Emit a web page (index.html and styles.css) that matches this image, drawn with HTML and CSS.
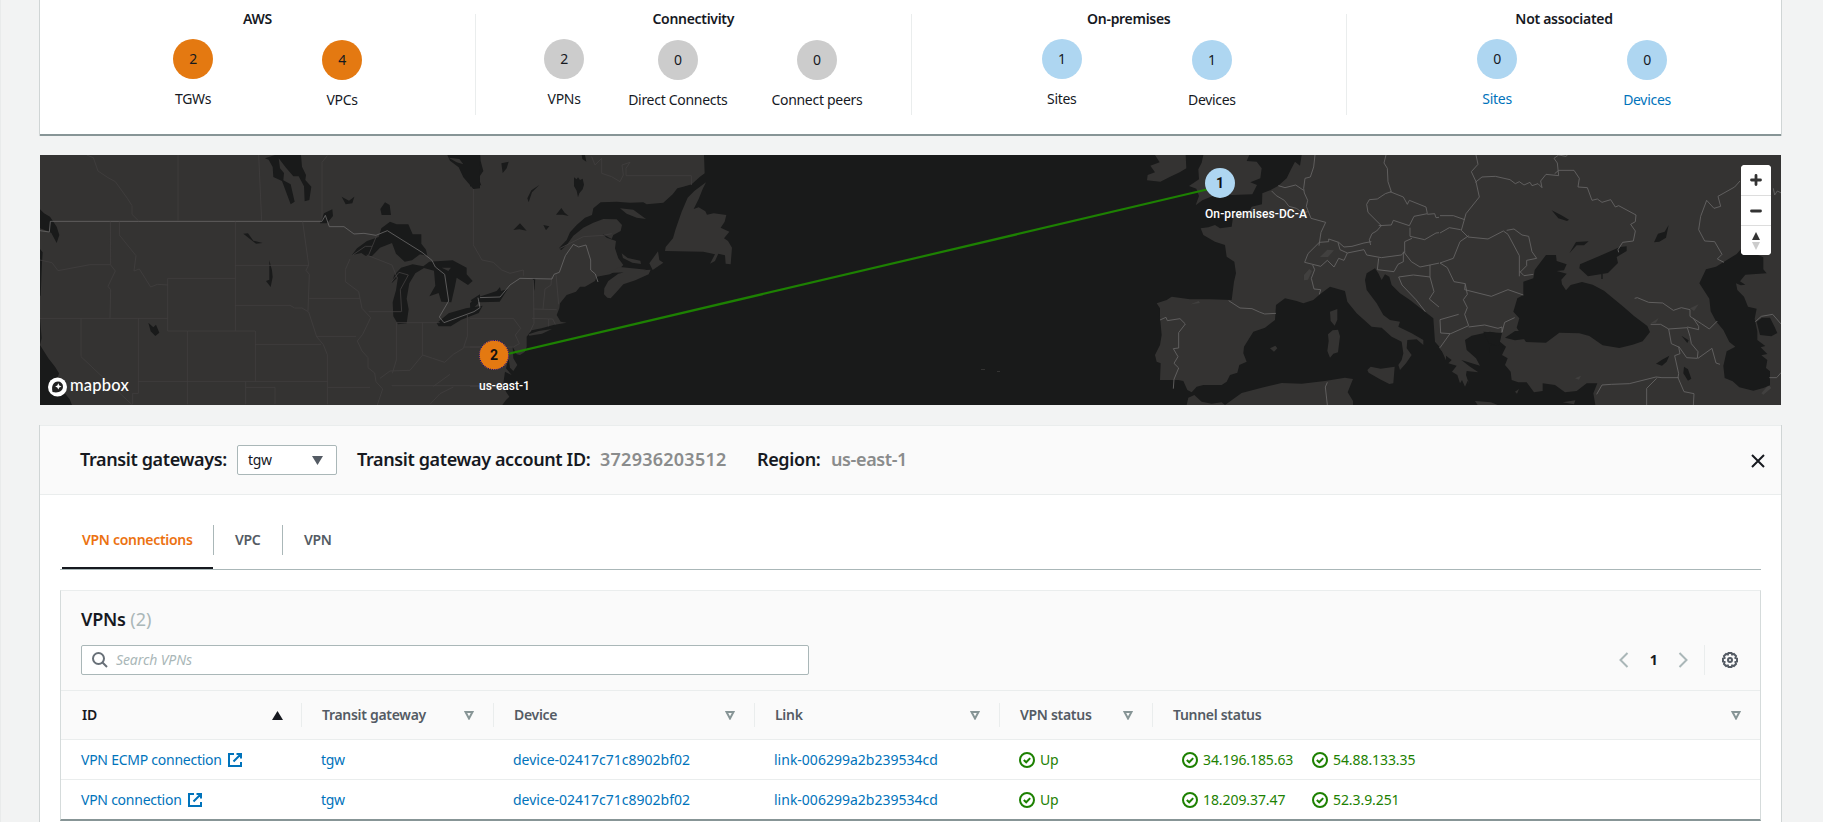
FILE: index.html
```
<!DOCTYPE html>
<html lang="en">
<head>
<meta charset="utf-8">
<title>Transit gateway network</title>
<link rel="stylesheet" href="styles.css">
</head>
<body>
<svg class="defs" width="0" height="0">
  <symbol id="ok" viewBox="0 0 16 16"><circle cx="8" cy="8" r="7" fill="none" stroke="#1d8102" stroke-width="2"/><path d="M4.800 8l2.400 2.300 4-4.200" fill="none" stroke="#1d8102" stroke-width="2"/></symbol>
  <symbol id="ext" viewBox="0 0 14 14"><path d="M6 1H1v12h12V9M8.500 1H13v4.500M13 1L5.500 8.500" fill="none" stroke="#0073bb" stroke-width="2"/></symbol>
  <symbol id="sort" viewBox="0 0 10 9"><path d="M1.500 1h7L5 7.500z" fill="none" stroke="#879596" stroke-width="2"/></symbol>
</svg>
<main class="page">
  <section class="summary">
    <div class="group"><h3>AWS</h3><div class="stats">
      <div class="stat"><span class="dot orange">2</span><span>TGWs</span></div>
      <div class="stat low"><span class="dot orange">4</span><span>VPCs</span></div></div></div>
    <div class="group"><h3>Connectivity</h3><div class="stats">
      <div class="stat"><span class="dot grey">2</span><span>VPNs</span></div>
      <div class="stat low"><span class="dot grey">0</span><span>Direct Connects</span></div>
      <div class="stat low"><span class="dot grey">0</span><span>Connect peers</span></div></div></div>
    <div class="group"><h3>On-premises</h3><div class="stats">
      <div class="stat"><span class="dot blue">1</span><span>Sites</span></div>
      <div class="stat low"><span class="dot blue">1</span><span>Devices</span></div></div></div>
    <div class="group"><h3>Not associated</h3><div class="stats">
      <div class="stat"><span class="dot blue">0</span><a>Sites</a></div>
      <div class="stat low"><span class="dot blue">0</span><a>Devices</a></div></div></div>
  </section>

  <section class="map">
    <svg class="canvas" viewBox="0 0 1741 250">
      <!-- North America: land, islands -->
      <g transform="translate(430 -10) scale(.33333)">
        <path class="land" d="M-1300 30H702L704 85 690 95 665 118 640 125 622 130 608 148 580 173 530 178 520 172 480 173 440 170 392 172 370 190 366 210 345 218 320 240 300 262 290 285 268 308 273 316 290 300 310 272 340 248 370 233 400 222 440 223 456 240 452 258 430 270 425 282 397 266 410 278 438 288 435 310 445 340 460 360 448 372 420 388 380 395 375 408 345 425 330 425 318 440 290 450 270 475 268 490 260 510 272 530 290 533 250 540 215 550 185 556 170 575 170 605 165 620 150 630 140 628 128 605 130 640 142 660 130 678 120 668 116 640 108 670 125 690 105 680 100 715 108 740 118 755 108 765 97 780H-1300z"/>
        <path class="land" d="M708 112l-10 20-12 30-15 30 15-5 20 12 5 10 20-4 38 5-5 20-12 18 26 12-16 20 12 8 12 20-4 50-15-2-2-25-20-5-10 22-15 8 15-28-35-8-115-2 2-12 22-26 8-28 18-52 18-42 20-20zM450 190l40 4 38 28-28-4-30-12zM403 430l12-22 30-22 35-8 62-4-6 14-40 18-36 12-20 22-18 20-10-2-10-10zM455 325l18 14 38 8 2 10-26-4-28-14zM538 355l26-36 4 26 12 8-32 22zM410 384l40-18 80 8-60 8zM176 568l30-10 40-6-30 14-38 6z"/>
        <path class="water" d="M0 20h30l2 28 8 30-14 20 8 24-20-12-14 16zM94 55l22-5-6 20-12 14zM172 160l12-24 24-16-22 22-10 30zM312 97l8 6 4-6 6 8 8-4 4 18-4 14-10 12-4 12-4-20-8-14zm-54 112l16-20 10 14 12 10-18-4zM130 255l20-20 20 22-22-4zM220 240l18 4-10 12zM335 30h10l4 20-12-8zM188 400h8l-3 38zM0 475l15-15 65-22 10-12 3 12 20-6-24 38-60 2-28 26z"/>
        <path class="state" d="M10 120V300L36 345 70 352 95 375 120 385 160 375V392M365 35l10 25 20-20v45l30 10 25 15 10-20-4-30 24-8-12 18v22H664v28M190 405l2 130-12 25M245 395l-2 25-18 12-6 60M258 388l8 90M190 492l70 2M186 520l62 2 8 16M236 522v22M0 520H130l22 30-16 20 12 26-18 10H0M270 310l70-35 60-4 25-5M0 724h100"/>
        <path class="border" d="M0 500l30-12-6-30 66-2 30-36 30-20 96 2 6-14 16-6 18-50 24-34 16 8 22-6 14 45v30l14 12 8 24"/>
      </g>
      <!-- United States and Canada: lakes, state lines -->
      <g transform="translate(-10 -10) scale(.33333)">
        <path class="water" d="M705 40l30-10h78l3 35 12 25-2 15 18 20-6 40-14 4-2-45-16-30-16 0-22-26-22-28 4 30 12 14-2 22 22 12 12 52-12 8-14-38-12-32-26-12-2-30-12-22zM30 193l12 12 18 10 20 30 8 25-8 24-16-30-12-6-22-8zM30 312l8 10-2 30-4 100h-2zM30 520l5 60-5 20 25 40 20 25 12 20-8 28 40 50 15 37H30zM355 533l15 14 8-8 10 24-12 10-14-14zM640 266l14-1 16 22 28 7-20 2-18-14zM718 346l8 30 2 20-6 30-14-18 10-4zM1252 30h98v100l-20 2-30-35-14-30-26-20zM935 155l22 12 16-12-6 20-20 3zM1065 172l14 8 4 30-28 0-4-18zM870 235l12-30 25-12 2 20-18 22zM966 330l15-20 30-22 35-12 8-26 26-20 20 8 35 0 13 30 26 0 0 28 14 18 4 18-22-4-24 18-22 4-26-24-12-32-36 14-24 25-20-1-12-8zM1085 415l8-25 20-22 35-10 32 6 18-14 70-4 42 22 0 20 18 20-14 12-34-22-6 30-10 44-30-2-8-26-28 10 18-32-4-45-30-8-26 16-18 30-8 46 6 32-6 42-26 3-14-24-2-42 10-36 6-40zM1220 535l36-30 52-15 50-8-12 22-52 20-32 20-36 0zM1322 466l28-18v22l-20 4z"/>
        <path class="land" d="M1256 38l32 4 12 16-20-6zM1235 368h28l-8 10z"/>
        <path class="border" d="M30 257l28 4 3-32H876l10-18 12 34 44 0 30 22 30-2 36 6 34-14L1176 322l30 24 10 20 28 22 12 80-28 48 14 17 90-33 18-12-6-30"/>
        <path class="state" d="M170 30l20 8 14 40 30 20 22 12 36 50 14 22 0 26 20 20M444 30V228M686 30l9 198M876 228V52l16-20M241 230l1 130 14 18-22 46 8 10-2 86M268 230v40l50 62-6 46 16-6 34 54 20-8 32 2M30 345l36 8 18 24 96-18h60M30 520H413M153 520V635L305 778M413 400V558M413 400H616M616 230V558M616 361H836M818 230l18 130-8 16 10 12-4 110M616 481H780l14 8 22 0 20 12 24 74 20 24 12 30V778M413 558H676V709M676 598H873M325 520V745H308V778M472 558V778M325 709H893M647 709V778M647 727h88v50M838 460h152M990 460l6 30 26 28-24 50-16 20 14 30 18 20 0 30 20 16 4 26 20 22-20 60M858 574h120M960 342l-14 32 0 36 40 30 4 20M1010 330l76 30 16 40M1016 500h98M1115 500l-4-66 24-44-28-8-22 28M1099 533v112l-12 40M1177 533v98M1099 533h130M1050 700l30-22 60-2 38-46 30 10 36 12 26-24 30-18 12-36V510M1302 606h48M893 727h127M1085 722H1350M1260 688l-50 36M1200 778l30-32 40-20M1016 330l24-58M968 330l38-26h20"/>
      </g>
      <!-- Western Europe -->
      <g transform="translate(1060 -10) scale(.33333)">
        <path class="land" d="M605 30l-5 32-15-12-13 25-12 25-25 22-23 13-25 10-1 33-31 7-5 10-50 15-5 35-35 5-15-10-20 7-23 3 8 20 35 20 30 10 5 35 23 15 5 35-6 25-7 55-65-2-60 0-55-8-15 10-30 10 10 15 0 25 5 55-5 30-15 30 5 20 12 5-2 50 55 0 15 3 12 27 13 7 15-17 20-5 55 0 15-10 10-20 22-7 6-23 22-10-10-25 2-20 28-45 35-12 30-23 3-45 27-20 35 8 20 7 30-10 20-17 30-23 45 13 7 32 28 35 45 40 30 3 30 27 30 15 5 35-5 20-10 15 5 15 18-20 17-25-15-20 2-25 28-2 20 17 0-15-35-20-40-20 5-15-30-5-20-15-20-35-30-40-5-30 5-20 25-15 10 15 10 20 10-17 13 7 7 25 25 25 30 20 45 35 25 20 5 70 17 20 16 36V30z"/>
        <path class="land" d="M165 30h92l2 40-20 12-30 14-28 14-40-4 2-16 22-8-14-20 28-10zM310 30h138l-8 18 30 2 15 20-4 30-30 12 20 8-14 28-60 2-40-4-26 10-24 10-20 15 10-28-8-22-22-8 30-20-2-30 10-20zM690 500l22-8 0 32-8 18-12-14zM684 568l14-12 16-2 6 20-6 48-14 4-10 12-8-20 4-30zM802 675l10-10 30 6 42-6-4 50-12 2-28-14-34-20zM510 610l16-8 6 8-10 10zM260 780l5-22 18-8 22 20 30 6 30-4 10 8zM375 780l50-36 60-16 60-14 60 2 70-8 60-10 24 4-16 40 16 26v12z"/>
        <path class="hill" d="M660 336l22-22 20 2-18 20zM612 390l16-18 8 6-12 26-12 2zM272 478l24-10 4 6z"/>
        <path class="border" d="M645 30l-4 36-10 30-16 4-4 30 2 14 10 22-4 18 14 36 44 12-14 30-6 40M515 138l14 14 24 14 14 18 22 6 20 14 14-4M535 122l20 6 32-8 24 16M614 352l10-26 34-34 28-2 0-8 30 10 16 14 24-2 36-10 22-4M714 292l6 22 22 10-10 22-16-6-14 26-20-20-20 18-48-12M638 360l6 14-10 26 8 32 20 2-4 14M386 467l34 22 36 2 22 10 16 6 34-2M180 525l18-8 4 10 38-6 16 16-20 26v46l-16 2 14 24-12 20 14 14-14 34-2 28M858 30l-6 24 10 16 2 40 10 30-18 6-24 16-24 2-8 14 4 24 40 40-14 16-14 8-8 18 4 16M870 140l40 16 12 22 6-12 50 20 4 20-40 8-14 28-48-16-6 14-38 2M982 208l22-2 4 12 50-6 22 4M930 248v26l44 10 34-20 20-2 14-14 38 6M936 280l-22 10 0 34 20 26 26 16 30-6 38-8 26 6 26-60M742 324l50-10 8 16 44 8 60-8 10-10M836 340l-4 34 50 6 12-22 16-8 0-30M896 396l44-6 50 6 12 44-14 22M896 396l10 24 42 44 28 36M990 360l0 36M1028 354l20 30 14 24 18 14M988 462l36 30 16 34 10 38-28 44M1040 526l30-14 10 0M1050 566l30-4M682 712l-6 14 6 54"/>
      </g>
      <!-- Eastern Europe, Black Sea and Caspian Sea -->
      <g transform="translate(1400 -10) scale(.33333)">
        <path class="land" d="M-3 30V608L15 630 35 645 25 655 50 662 36 680 52 690 60 715 66 705 75 725 84 705 88 720 78 690 80 678 115 682 88 664 64 645 120 662 108 640 80 615 75 585 95 572 150 560 182 567 180 590 198 605 186 630 203 640 195 660 212 680 215 705 235 712 260 712 282 742 308 738 308 715 345 720 375 742 410 738 440 715 472 715 460 745 466 780H1030V30zM105 768l48 4 20 8h-60zM368 772l38-6-4 12zM225 740l12-8-6 14z"/>
        <path class="hill" d="M510 572l20-4 14 4-14 6zM540 565l24-6-6 18-16 2zM585 570l40-14-22 16zM632 535l24-16-8 14zM750 490l26-12-14 20zM964 745l22-26 8 10-24 20zM405 700l18-8-6 12z"/>
        <path class="water" d="M230 548l8-28-18-20 12-40 18-10 0-40 30-10 4-25 34-45 30 0 2 18 30 10-8 18-22 2 30 8-16 18 2 14 12 18 14-16 34-9 32 8 34 18 60 50 30 26 40 30 8 18-22 28-30 10-40 10-50-8-40-28-30-8-60-2-40 30-60-2zM420 358l60-26 60-26 20-2 0 14-30 18 4 18-30 30-60 10-26-24zM484 380h4v22h-4zM195 578l30-20 20 0 28 12-18 12-30 4zM130 560l56 4-10 40-30-10zM150 600l40 4-10 20-30 0zM335 196l28 14 24 14-6 4-26-8zM388 325l20-34 38-2-14 12-22 0zM642 292l12-26 20-6 12-20-8 38-20 12zM648 656l18-12 22-12-8 18-14 12zM732 665l12 8 10 28-10 6-14-22zM724 572l22 14-4 8z"/>
        <path class="water" d="M778 415l20-42 30-8 62-38 16-18 64 28 0 36 10 12-64 4-16 20 16 10-14 2-14-6 4 20 20 20 12 30 26 6-6 30 8 38 0 26 24 18-14 4 20 20-18 4 18 14-4 24 12 10 0 42-20 8-30 8-42-10-20-18-24-10-4-36 10-44 26-14-18-14-18-36-22-26-16-30-4-38zM950 530l16-12 24 0 14 28 8 18-18 10-34-4z"/>
        <path class="border" d="M108 30l6 28-20 22 14 30 10 46-40 50-14 50 20 20 60 6 46-24 14 10 34 64 0 62M106 112l20-16 40-2 44 10 16 12 12-6 14 10 18-8 6 10 18-6 12 12-4-20 16-20 38 4-4-38-10-14 14-10 22 4 8-8M344 86l12-10 46 0 16 24-4 26 28 2 14 38 16-4 14 10 26-8 14 22 10-4 52 28-2 20-14 8 14 20-6 30-32 4-14 22 2 8M200 256l22-4 24 18 20 4 10 46 14 20-30 6 0 16-20 20M240 380l12 12 28-4M0 212l40 0 34 12M0 264l28-16 34 6M0 354l40-14 20-50 26-18M0 354l22 14 20 42 34 6-2 18 80 20 50-20 46 16M76 418l6 30-12 16 12 24-8 20 12 34-54 24-30-2-2-40 56-16M86 546l48-6 40 10 12-4 0 16 8-30 30-14M30 566L0 608M584 460l8-2 34 14 42 2 32 22 24-8 26 6 0 20 34 22 24 16 24-24M632 538h30l24 14 8 44 22 10 4 20-16 6 12 54-2 12 18 42 30 6-2 36M686 552l56-4 8 26 4 22 20 24-2 20-32-2-24-34M774 640l42-30 12 44 12 4M760 520l16 24 0 10-34-8M470 748l16-28 28-2 54-2 80-20 18 2 50 0M650 700l-30 30 0 50M900 108l-16 18-50 28 8 30-20 6-22-24-18 48-6 40 18 34 30 2 22 38-14 14 20 10M946 530l18-16 34-6 26 30M988 698l22 0 14-16M1000 130l4 20 8-12 12 6"/>
      </g>
      <path class="land" d="M941 214h4v1h-4zM957 216h3v1h-3z"/>
      <path d="M453 202.500L1168 34.300" stroke="#1d8102" stroke-width="2.200"/>
      <g transform="translate(17.500 232)">
        <circle r="9.500" fill="#fff"/><path d="M-5 5C-6.500-1-4-5.500.5-5.500A5 5 0 0 1 5.500-.5C5.500 4 1 6.500-5 5z" fill="#222"/><path d="M.8-3.800l1 2.200L4-.6 1.800.4l-1 2.200-1-2.200-2.200-1 2.200-1z" fill="#fff"/>
      </g>
    </svg>
    <span class="mapbox">mapbox</span>
    <div class="pin aws"><b>2</b><span>us-east-1</span></div>
    <div class="pin site"><b>1</b><span>On-premises-DC-A</span></div>
    <div class="zoom">
      <button aria-label="Zoom in"><svg width="12" height="12"><path d="M6 1.500v9M1.500 6h9" stroke="#333" stroke-width="2.800" stroke-linecap="round"/></svg></button>
      <button aria-label="Zoom out"><svg width="12" height="12"><path d="M1.500 6h9" stroke="#333" stroke-width="2.800" stroke-linecap="round"/></svg></button>
      <button aria-label="North"><svg width="8" height="18"><path d="M0 8l4-8 4 8z" fill="#333"/><path d="M0 10h8l-4 8z" fill="#ccc"/></svg></button>
    </div>
  </section>

  <section class="detail">
    <header class="bar">
      <h2 class="gw">Transit gateways:</h2>
      <div class="select"><span>tgw</span><svg width="11" height="9"><path d="M0 0h11L5.500 9z" fill="#545b64"/></svg></div>
      <h2 class="acct">Transit gateway account ID:</h2><h2 class="muted num">372936203512</h2>
      <h2 class="reg">Region:</h2><h2 class="muted">us-east-1</h2>
      <svg class="close" width="14" height="14"><path d="M1 1l12 12M13 1L1 13" stroke="#16191f" stroke-width="2"/></svg>
    </header>
    <nav class="tabs">
      <div class="tab active"><span>VPN connections</span></div>
      <div class="tab"><span>VPC</span></div>
      <div class="tab last"><span>VPN</span></div>
    </nav>
    <section class="table">
      <div class="tools">
        <h2 class="title">VPNs <i>(2)</i></h2>
        <div class="row">
          <div class="search"><svg width="16" height="16"><circle cx="6.500" cy="6.500" r="5.500" fill="none" stroke="#687078" stroke-width="2"/><path d="M10.500 10.500l4.500 4.500" stroke="#687078" stroke-width="2"/></svg><span>Search VPNs</span></div>
          <div class="pager">
            <svg width="10" height="16"><path d="M8.500 1L1.500 8l7 7" fill="none" stroke="#aab7b8" stroke-width="2"/></svg>
            <b>1</b>
            <svg width="10" height="16"><path d="M1.500 1l7 7-7 7" fill="none" stroke="#aab7b8" stroke-width="2"/></svg>
          </div>
          <div class="gear"><svg width="16" height="16" viewBox="0 0 16 16" fill="none" stroke="#545b64" stroke-width="2"><path d="M6.500 1h3l.6 1.600 1.800-.6 2.100 2.100-.6 1.800 1.600.6v3l-1.600.6.6 1.800-2.100 2.100-1.800-.6L9.500 15h-3l-.6-1.600-1.800.6L2 11.900l.6-1.800L1 9.500v-3l1.600-.6L2 4.100 4.100 2l1.800.6z"/><circle cx="8" cy="8" r="2"/></svg></div>
        </div>
      </div>
      <div class="grid head">
        <div class="th dark">ID<svg width="11" height="9"><path d="M0 9h11L5.500 0z" fill="#16191f"/></svg></div>
        <div class="th">Transit gateway<svg width="10" height="9"><use href="#sort"/></svg></div>
        <div class="th">Device<svg width="10" height="9"><use href="#sort"/></svg></div>
        <div class="th">Link<svg width="10" height="9"><use href="#sort"/></svg></div>
        <div class="th">VPN status<svg width="10" height="9"><use href="#sort"/></svg></div>
        <div class="th end">Tunnel status<svg width="10" height="9"><use href="#sort"/></svg></div>
      </div>
      <div class="grid body">
        <div class="td"><a class="name">VPN ECMP connection</a><svg class="ext" width="14" height="14"><use href="#ext"/></svg></div>
        <div class="td"><a>tgw</a></div>
        <div class="td"><a class="code">device-02417c71c8902bf02</a></div>
        <div class="td"><a class="code">link-006299a2b239534cd</a></div>
        <div class="td ok"><svg width="16" height="16"><use href="#ok"/></svg>Up</div>
        <div class="td ok tunnels"><div><svg width="16" height="16"><use href="#ok"/></svg>34.196.185.63</div><div><svg width="16" height="16"><use href="#ok"/></svg>54.88.133.35</div></div>
      </div>
      <div class="grid body final">
        <div class="td"><a class="name">VPN connection</a><svg class="ext" width="14" height="14"><use href="#ext"/></svg></div>
        <div class="td"><a>tgw</a></div>
        <div class="td"><a class="code">device-02417c71c8902bf02</a></div>
        <div class="td"><a class="code">link-006299a2b239534cd</a></div>
        <div class="td ok"><svg width="16" height="16"><use href="#ok"/></svg>Up</div>
        <div class="td ok tunnels"><div><svg width="16" height="16"><use href="#ok"/></svg>18.209.37.47</div><div><svg width="16" height="16"><use href="#ok"/></svg>52.3.9.251</div></div>
      </div>
    </section>
  </section>
</main>
</body>
</html>
```
FILE: styles.css
```
* { box-sizing: border-box; }
body { margin: 0; height: 822px; overflow: hidden; background: #f2f3f3; color: #16191f; font: 14px/22px "Noto Sans", "Open Sans", sans-serif; letter-spacing: -0.3px; }
h2, h3 { margin: 0; font-weight: 600; }
a { color: #0073bb; }
svg { flex: none; display: block; }
.defs { position: absolute; }
.page { padding: 0 42px 0 39px; border-left: 1px solid #e9ebeb; }

.summary { height: 136px; padding-top: 14px; display: grid; grid-template-columns: 436px 435.5px 435.5px 434px; background: #fff; border-bottom: 2px solid #879596; box-shadow: -1px 0 #d0d5d5, 1px 0 #d0d5d5; }
.group { height: 101px; border-right: 1px solid #eaeded; }
.group:last-child { border-right: 0; }
.group h3 { font-size: 14px; line-height: 22px; margin-top: -6px; text-align: center; }
.stats { display: flex; justify-content: space-evenly; padding: 9px 4px 0 24px; }
.stat { display: flex; flex-direction: column; align-items: center; gap: 9px; }
.low { padding-top: 1px; }
.dot { width: 40px; height: 40px; line-height: 40px; border-radius: 50%; text-align: center; }
.orange { background: #e47911; }
.grey { background: #ccc; }
.blue { background: #aed6f1; }

.map { position: relative; height: 250px; margin-top: 19px; background: #191a1a; overflow: hidden; font-family: Roboto, "Liberation Sans", sans-serif; }
.canvas { width: 1741px; height: 250px; }
.land { fill: #343332; }
.water { fill: #191a1a; }
.hill { fill: #41403f; }
.state, .border { fill: none; stroke-width: 2.5px; }
.state { stroke: #413f3e; }
.border { stroke: #696867; }
.mapbox { position: absolute; left: 30px; top: 218px; color: #fff; font: 500 16.5px/24px Lato, sans-serif; letter-spacing: .2px; }
.pin { position: absolute; color: #fff; letter-spacing: 0; }
.pin b { display: block; width: 30px; height: 30px; line-height: 30px; border-radius: 50%; text-align: center; color: #111; font-size: 14px; }
.pin span { display: block; margin-top: 7px; font: 500 12px/18px Roboto, sans-serif; white-space: nowrap; }
.aws { left: 439px; top: 185px; }
.aws b { background: #e47911; border: 1px dotted #00009c; line-height: 28px; }
.site { left: 1165px; top: 13px; }
.site b { background: #aed6f1; }
.site span { letter-spacing: .1px; }
.zoom { position: absolute; right: 10px; top: 10px; width: 30px; border-radius: 4px; background: #fff; overflow: hidden; }
.zoom button { display: flex; width: 30px; height: 30px; padding: 0; align-items: center; justify-content: center; border: 0; background: #fff; }
.zoom button + button { border-top: 1px solid #ddd; }

.detail { height: 420px; margin-top: 20px; background: #fff; border-top: 1px solid #eaeded; box-shadow: -1px 0 #d0d5d5, 1px 0 #d0d5d5; }
.bar { height: 69px; padding: 0 16px 0 40px; display: flex; align-items: center; background: #fafafa; border-bottom: 1px solid #eaeded; }
.bar h2 { font-size: 18px; line-height: 22px; margin-top: -3px; white-space: nowrap; letter-spacing: -0.38px; }
.bar .gw { width: 157px; }
.bar .acct { width: 243px; margin-left: 20px; }
.bar .num { width: 157px; letter-spacing: .25px; }
.bar .reg { width: 74px; }
.bar .muted { color: #8a8c8c; }
.select { width: 100px; height: 30px; padding: 0 13px 0 10px; display: flex; align-items: center; justify-content: space-between; background: #fff; border: 1px solid #aab7b8; border-radius: 2px; }
.close { margin: 2px 0 0 auto; }
.tabs { height: 75px; margin: 0 20px; padding: 30px 0 0 2px; display: flex; border-bottom: 1px solid #aab7b8; }
.tab { position: relative; height: 30px; padding: 0 20px; line-height: 30px; border-right: 1px solid #aab7b8; color: #545b64; font-weight: 600; }
.tab.active { width: 152px; color: #ec7211; }
.tab.active::after { content: ""; position: absolute; left: 0; right: 0; bottom: -14px; height: 2px; background: #16191f; }
.tab:nth-child(2) { width: 69px; padding-left: 21px; }
.tab.last { border-right: 0; padding-left: 21px; }
.table { margin: 20px 20px 0; height: 231px; border: 1px solid #d5dbdb; border-top-color: #eaeded; border-bottom: 2px solid #879596; }
.tools { height: 100px; padding: 16px 20px 0; background: #fafafa; border-bottom: 1px solid #eaeded; }
.title { font-size: 18px; line-height: 24px; letter-spacing: -0.2px; }
.title i { color: #aab7b8; font-style: normal; font-weight: 400; letter-spacing: 0; }
.row { display: flex; margin-top: 14px; align-items: center; }
.search { width: 728px; height: 30px; padding-left: 10px; gap: 8px; display: flex; align-items: center; background: #fff; border: 1px solid #aab7b8; border-radius: 2px; color: #aab7b8; font-style: italic; letter-spacing: -0.1px; }
.pager { display: flex; align-items: center; justify-content: space-between; width: 69px; margin-left: auto; margin-right: 16px; }
.gear { height: 30px; padding: 7px 2px 0 17px; border-left: 1px solid #eaeded; }
.grid { display: grid; grid-template-columns: 241px 192px 261px 245px 153px 1fr; align-items: center; }
.head { height: 49px; background: #fafafa; border-bottom: 1px solid #eaeded; }
.th { height: 24px; padding: 0 19px 0 20px; display: flex; align-items: center; justify-content: space-between; font-weight: 600; color: #545b64; border-right: 1px solid #eaeded; }
.th.dark { color: #16191f; padding: 0 18px 0 21px; }
.th.end { border-right: 0; }
.body { height: 40px; border-bottom: 1px solid #eaeded; }
.body.final { border-bottom: 0; }
.td { padding-left: 19px; display: flex; align-items: center; white-space: nowrap; }
.td:first-child { padding-left: 20px; }
.name { letter-spacing: -0.25px; }
.code { letter-spacing: 0; }
.ext { margin-left: 6px; }
.ok { color: #1d8102; gap: 5px; }
.td.tunnels { padding-left: 29px; gap: 0; letter-spacing: -0.08px; }
.tunnels div { width: 130px; display: flex; align-items: center; gap: 5px; }
```
